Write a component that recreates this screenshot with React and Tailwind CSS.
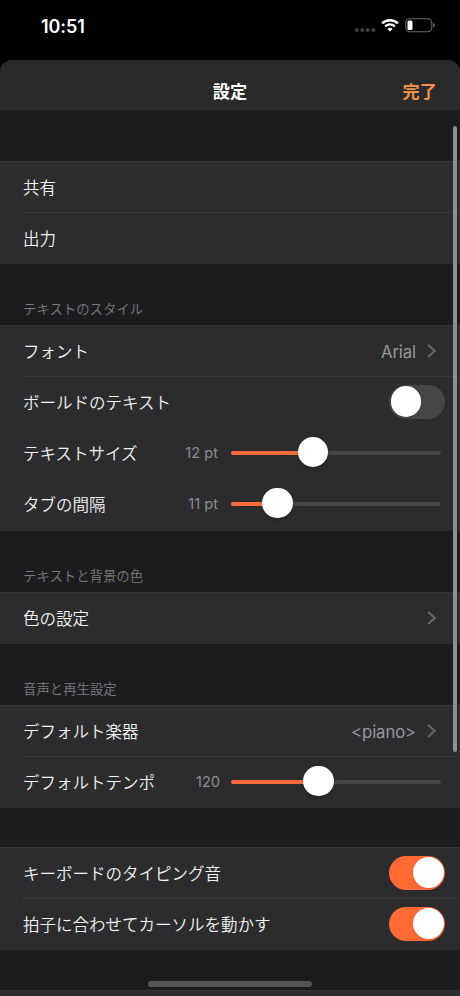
import { useState } from 'react';
import clsx from 'clsx';

const SHARE_ROWS = ['共有', '出力'];

function StatusBar() {
  return (
    <div className="flex h-[60px] shrink-0 items-start justify-between bg-black pl-[41px] pr-[25px] pt-[15px] text-white">
      <span className="pt-px text-[18px] leading-[22px] font-semibold tracking-[-0.1px]">10:51</span>
      <div className="flex h-[21px] items-center">
        <svg width="22" height="6" viewBox="0 0 22 6" className="mt-[9px]" fill="#3f3f40">
          <circle cx="2.8" cy="3" r="2" />
          <circle cx="8.3" cy="3" r="2" />
          <circle cx="13.8" cy="3" r="2" />
          <circle cx="19.3" cy="3" r="2" />
        </svg>
        <svg width="18" height="14" viewBox="0 0 18 14" className="ml-[5px] mb-[2px]" fill="none" stroke="#fff">
          <path d="M1.1 5.4a11.2 11.2 0 0 1 15.8 0" strokeWidth="2.5" />
          <path d="M4.1 8.5a6.9 6.9 0 0 1 9.8 0" strokeWidth="2.3" />
          <path d="M9 13.6l-2.6-2.6a3.6 3.6 0 0 1 5.2 0z" fill="#fff" stroke="none" />
        </svg>
        <svg width="30" height="15" viewBox="0 0 30 15" className="ml-[6px]">
          <rect x="0.8" y="0.8" width="26" height="13" rx="4" fill="none" stroke="#666867" strokeWidth="1.1" />
          <rect x="2.5" y="2.5" width="5" height="9.6" rx="1.6" fill="#fff" />
          <path d="M28.2 5v4.6a2.4 2.4 0 0 0 0-4.6z" fill="#666867" />
        </svg>
      </div>
    </div>
  );
}

function SectionGap({ title, className }) {
  return (
    <div className={clsx('flex shrink-0 items-end px-[23px] text-[13.4px] text-[#7d7d80]', className)}>
      {title && <h2 className="leading-[18px] font-[350]">{title}</h2>}
    </div>
  );
}

function Group({ className, children }) {
  return <div className={clsx('shrink-0 border-t border-[#353537] bg-[#2c2c2e]', className)}>{children}</div>;
}

function Row({ label, divider, children }) {
  return (
    <div className="h-[51px] pl-[23px]">
      <div className={clsx('flex h-full items-center border-b', divider ? 'border-[#38383a]' : 'border-transparent')}>
        <span className="flex-1 pt-[2px] text-[16.5px] font-[350] text-[#f2f2f2]">{label}</span>
        {children}
      </div>
    </div>
  );
}

function Disclosure({ value }) {
  return (
    <div className="flex items-center pr-[23px]">
      {value && <span className="pt-[3px] text-[16.7px] tracking-[-0.1px] text-[#98989d]">{value}</span>}
      <svg width="10" height="14" viewBox="0 0 10 14" className="ml-[11px]" fill="none" stroke="#68686b" strokeWidth="2">
        <path d="M1.2 1L7.7 7L1.2 13" />
      </svg>
    </div>
  );
}

function Toggle({ on, onClick }) {
  return (
    <button
      className={clsx(
        'mr-[15px] mb-px flex h-[34px] w-[56px] items-center rounded-full px-[1.5px]',
        on ? 'justify-end bg-[#ff6a35]' : 'justify-start bg-[#464649]'
      )}
      onClick={onClick}
    >
      <span className="h-[30.5px] w-[30.5px] rounded-full bg-white shadow" />
    </button>
  );
}

function Slider({ value, percent }) {
  return (
    <div className="flex items-center pr-[19px]">
      <span className="pt-[2px] text-[14.6px] text-[#8e8e93]">{value}</span>
      <div className={clsx('flex w-[210px] items-center', value.endsWith('pt') ? 'ml-[13px]' : 'ml-[11px]')}>
        <div className="h-[4px] rounded-l-full bg-[#f96b3a]" style={{ width: `${percent}%` }} />
        <div className="z-10 -mx-[15px] mb-[2px] h-[30.5px] w-[30.5px] shrink-0 rounded-full bg-white shadow-md" />
        <div className="h-[4px] flex-1 rounded-r-full bg-[#464649]" />
      </div>
    </div>
  );
}

export default function App() {
  const [bold, setBold] = useState(false);
  const [typingSound, setTypingSound] = useState(true);
  const [moveCursor, setMoveCursor] = useState(true);

  return (
    <div className="relative flex h-[996px] w-[460px] flex-col overflow-hidden bg-black font-[Inter,'Noto_Sans_CJK_JP',sans-serif]">
      <StatusBar />

      <div className="flex min-h-0 flex-1 flex-col overflow-hidden rounded-t-[12px] bg-[#1c1c1e]">
        {/* Header */}
        <header className="grid h-[50px] shrink-0 grid-cols-3 items-center border-b border-[#303031] bg-[#2a2a2a] px-[23px] pt-[14px] text-[17.2px] font-bold">
          <h1 className="col-start-2 text-center text-white">設定</h1>
          <button className="justify-self-end text-[#f2914b]">完了</button>
        </header>

        <SectionGap className="h-[51px]" />
        <Group>
          {SHARE_ROWS.map((label, i) => (
            <Row key={label} label={label} divider={i < SHARE_ROWS.length - 1} />
          ))}
        </Group>

        <SectionGap title="テキストのスタイル" className="h-[61px] pb-[7px]" />
        <Group className="pb-px">
          <Row label="フォント" divider>
            <Disclosure value="Arial" />
          </Row>
          <Row label="ボールドのテキスト">
            <Toggle on={bold} onClick={() => setBold(!bold)} />
          </Row>
          <Row label="テキストサイズ">
            <Slider value="12 pt" percent={39} />
          </Row>
          <Row label="タブの間隔">
            <Slider value="11 pt" percent={22} />
          </Row>
        </Group>

        <SectionGap title="テキストと背景の色" className="h-[61px] pb-[7px]" />
        <Group>
          <Row label="色の設定">
            <Disclosure />
          </Row>
        </Group>

        <SectionGap title="音声と再生設定" className="h-[61px] pb-[7px]" />
        <Group>
          <Row label="デフォルト楽器" divider>
            <Disclosure value="<piano>" />
          </Row>
          <Row label="デフォルトテンポ">
            <Slider value="120" percent={41.5} />
          </Row>
        </Group>

        <SectionGap className="h-[39px]" />
        <Group>
          <Row label="キーボードのタイピング音" divider>
            <Toggle on={typingSound} onClick={() => setTypingSound(!typingSound)} />
          </Row>
          <Row label="拍子に合わせてカーソルを動かす">
            <Toggle on={moveCursor} onClick={() => setMoveCursor(!moveCursor)} />
          </Row>
        </Group>

        <SectionGap className="h-[40px]" />
        <Group>
          <Row />
        </Group>
      </div>

      {/* Scroll indicator and home bar */}
      <div className="absolute top-[126px] right-[3px] h-[626px] w-[4px] rounded-full bg-[#8e8e90]" />
      <div className="absolute bottom-[9px] left-[148px] h-[6px] w-[164px] rounded-full bg-[#545455]" />
    </div>
  );
}
